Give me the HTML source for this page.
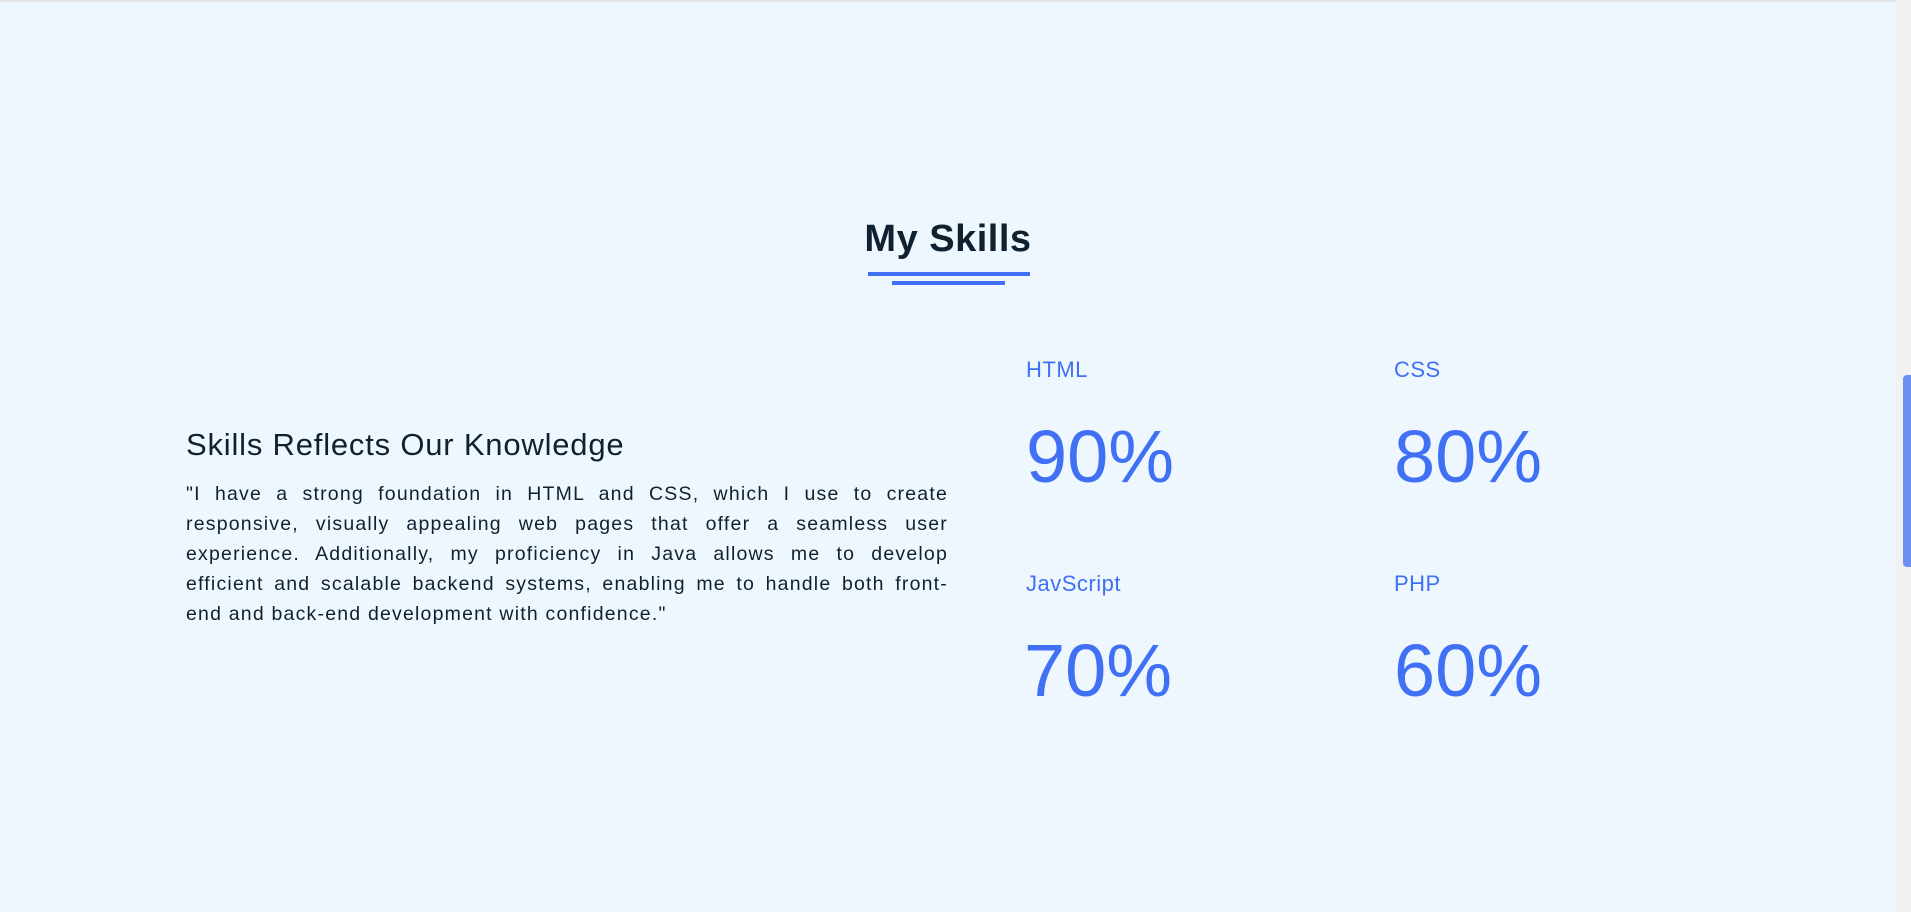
<!DOCTYPE html>
<html><head><meta charset="utf-8"><style>
*{margin:0;padding:0;box-sizing:border-box}
body{width:1911px;height:912px;background:#eff7fe;font-family:"Liberation Sans",sans-serif;position:relative;overflow:hidden;color:#0f2130}
.top{position:absolute;left:0;top:0;width:1896px;height:2px;background:#e2e4e6}
.track{position:absolute;right:0;top:0;width:15px;height:912px;background:#f1f1f1}
.thumb{position:absolute;right:0;top:375px;width:8px;height:192px;background:#6b8ff0;border-radius:4px 0 0 4px}
.title{position:absolute;left:0;width:1896px;top:218px;text-align:center;font-size:38px;font-weight:bold;letter-spacing:0.5px}
.l1{position:absolute;left:868px;top:272px;width:162px;height:4px;background:#4070f4}
.l2{position:absolute;left:892px;top:281px;width:113px;height:4px;background:#4070f4}
h3{position:absolute;left:186px;top:427px;font-size:31px;font-weight:normal;letter-spacing:0.8px}
.p{position:absolute;left:186px;top:479px;width:762px;font-size:19.5px;line-height:30px;letter-spacing:1.2px}
.p div{text-align:justify;text-align-last:justify;white-space:nowrap}
.p div.last{text-align-last:left}
.lab{position:absolute;font-size:22px;color:#4070f4;letter-spacing:0.5px}
.num{position:absolute;font-size:74px;color:#4070f4}
</style></head><body>
<div class="top"></div>
<div class="title">My Skills</div>
<div class="l1"></div><div class="l2"></div>
<h3>Skills Reflects Our Knowledge</h3>
<div class="p">
<div>"I have a strong foundation in HTML and CSS, which I use to create</div>
<div>responsive, visually appealing web pages that offer a seamless user</div>
<div>experience. Additionally, my proficiency in Java allows me to develop</div>
<div>efficient and scalable backend systems, enabling me to handle both front-</div>
<div class="last">end and back-end development with confidence."</div>
</div>
<div class="lab" style="left:1026px;top:357px">HTML</div>
<div class="lab" style="left:1394px;top:357px">CSS</div>
<div class="num" style="left:1026px;top:414px">90%</div>
<div class="num" style="left:1394px;top:414px">80%</div>
<div class="lab" style="left:1026px;top:571px">JavScript</div>
<div class="lab" style="left:1394px;top:571px">PHP</div>
<div class="num" style="left:1024px;top:628px">70%</div>
<div class="num" style="left:1394px;top:628px">60%</div>
<div class="track"></div><div class="thumb"></div>
</body></html>
